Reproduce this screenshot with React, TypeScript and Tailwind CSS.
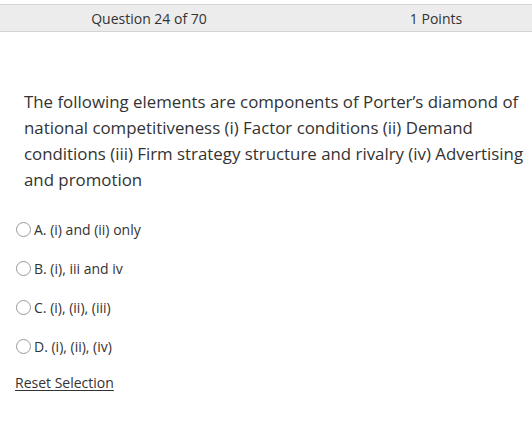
import React from "react";

const options = [
  "A. (i) and (ii) only",
  "B. (i), iii and iv",
  "C. (i), (ii), (iii)",
  "D. (i), (ii), (iv)",
];

export default function App() {
  return (
    <div
      className="w-[532px] h-[427px] bg-white text-[#333] overflow-hidden"
      style={{ fontFamily: '"Open Sans", "Noto Sans", sans-serif' }}
    >
      <div className="h-[4px]" />
      <div className="flex h-[28px] items-center bg-[#ececec] border-y border-[#d4d4d4] text-[14px]">
        <div className="w-[298px] text-center">Question 24 of 70</div>
        <div className="w-[42px]" />
        <div className="w-[192px] text-center">1 Points</div>
      </div>
      <div className="pl-[24px] pr-[6px] pt-[57px] text-[16.85px] leading-[26px]">
        The following elements are components of Porter’s diamond of national
        competitiveness (i) Factor conditions (ii) Demand conditions (iii) Firm
        strategy structure and rivalry (iv) Advertising and promotion
      </div>
      <div className="mt-[26px] flex flex-col gap-[19px] pl-[16px]">
        {options.map((o) => (
          <label key={o} className="flex h-[20px] items-center text-[14px]">
            <span className="h-[15px] w-[15px] rounded-full border border-[#9a9a9a] bg-white" />
            <span className="ml-[3px]">{o}</span>
          </label>
        ))}
      </div>
      <div className="mt-[16px] pl-[15px] text-[14px] underline underline-offset-2">
        Reset Selection
      </div>
    </div>
  );
}
